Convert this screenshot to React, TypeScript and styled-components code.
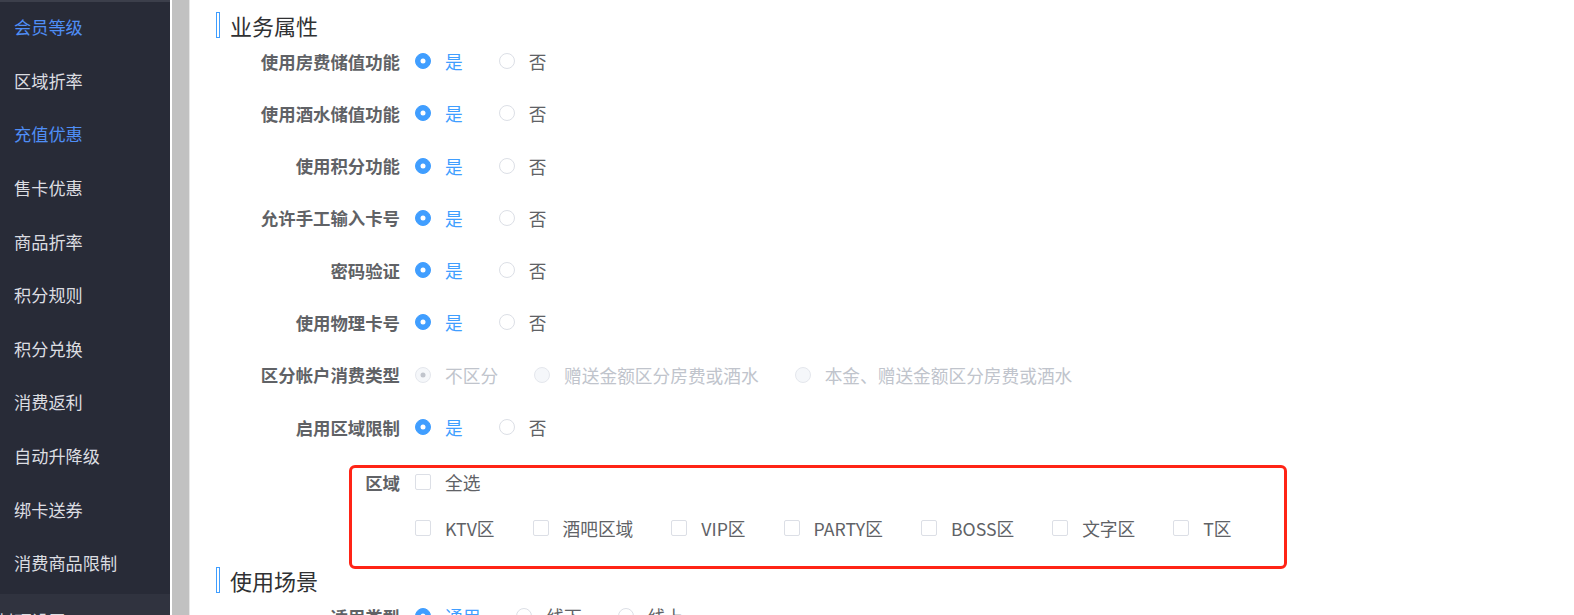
import styled, { createGlobalStyle } from "styled-components";

const GlobalStyle = createGlobalStyle`
  html, body {
    margin: 0;
    padding: 0;
    background: #fff;
  }
  body {
    font-family: "Noto Sans CJK SC", "Noto Sans", sans-serif;
    overflow: hidden;
  }
`;

const Page = styled.div`
  display: flex;
  height: 615px;
  overflow: hidden;
`;

const Sidebar = styled.nav`
  display: flex;
  flex-direction: column;
  width: 170px;
  flex-shrink: 0;
  background: #282b37;
  box-shadow: inset 0 2px 0 #3c3f4b;
  overflow: hidden;
`;

const MenuItem = styled.div<{ $active?: boolean }>`
  display: flex;
  align-items: center;
  flex-shrink: 0;
  height: 53.6px;
  padding-left: 14px;
  font-size: 17.2px;
  color: ${(p) => (p.$active ? "#4f8ef6" : "#dcdde1")};
`;

const SubMenuTitle = styled(MenuItem)`
  margin-top: 4px;
  padding-left: 0;
  background: #30333f;
  text-indent: -3px;
`;

const Gutter = styled.div`
  width: 17px;
  flex-shrink: 0;
  background: #c1c1c1;
  border-left: 2px solid #fff;
  border-right: 1px solid #e6e6e6;
`;

const Content = styled.main`
  flex: 1;
  padding-left: 26px;
  padding-top: 8px;
`;

const SectionTitle = styled.h3`
  display: flex;
  align-items: center;
  gap: 10px;
  height: 34px;
  margin: 0 0 5px;
  font-size: 22px;
  font-weight: 400;
  color: #303133;

  &::before {
    content: "";
    width: 2px;
    height: 24px;
    border: 1px solid #409eff;
    background: #fff;
  }
`;

const FormItem = styled.div`
  display: flex;
  align-items: center;
  height: 28px;
  margin-bottom: 24.3px;
`;

const Label = styled.label<{ $width?: number }>`
  width: ${(p) => p.$width ?? 199}px;
  flex-shrink: 0;
  padding-right: 15px;
  box-sizing: border-box;
  text-align: right;
  font-size: 17.4px;
  font-weight: 700;
  color: #606266;
`;

const RadioItem = styled.span`
  display: inline-flex;
  align-items: center;
  gap: 14px;
  margin-right: 36px;
`;

const RadioCircle = styled.span<{ $checked?: boolean; $disabled?: boolean }>`
  position: relative;
  width: 16px;
  height: 16px;
  box-sizing: border-box;
  border-radius: 50%;
  border: 1px solid
    ${(p) =>
      p.$disabled ? "#e4e7ed" : p.$checked ? "#409eff" : "#dcdfe6"};
  background: ${(p) =>
    p.$disabled ? "#f5f7fa" : p.$checked ? "#409eff" : "#fff"};

  &::after {
    content: "";
    display: ${(p) => (p.$checked ? "block" : "none")};
    position: absolute;
    left: 50%;
    top: 50%;
    width: 5px;
    height: 5px;
    border-radius: 50%;
    transform: translate(-50%, -50%);
    background: ${(p) => (p.$disabled ? "#c0c4cc" : "#fff")};
  }
`;

const OptionText = styled.span<{ $checked?: boolean; $disabled?: boolean }>`
  font-size: 17.7px;
  color: ${(p) =>
    p.$disabled ? "#c0c4cc" : p.$checked ? "#409eff" : "#606266"};
`;

const Highlight = styled.div`
  width: 932px;
  margin-left: 133px;
  margin-bottom: -6px;
  padding: 0 0 24px;
  border: 3px solid #ff2416;
  border-radius: 6px;
`;

const CheckRow = styled.div`
  display: flex;
  align-items: center;
  height: 28px;
  & + & {
    margin-top: 18px;
  }
`;

const CheckItem = styled.span`
  display: inline-flex;
  align-items: center;
  gap: 14px;
  margin-right: 38px;
`;

const CheckBox = styled.span`
  width: 16px;
  height: 16px;
  box-sizing: border-box;
  border: 1px solid #dcdfe6;
  border-radius: 2px;
  background: #fff;
`;

const menu = [
  { name: "会员等级", active: true },
  { name: "区域折率" },
  { name: "充值优惠", active: true },
  { name: "售卡优惠" },
  { name: "商品折率" },
  { name: "积分规则" },
  { name: "积分兑换" },
  { name: "消费返利" },
  { name: "自动升降级" },
  { name: "绑卡送券" },
  { name: "消费商品限制" },
];

const yesNoRows = [
  "使用房费储值功能",
  "使用酒水储值功能",
  "使用积分功能",
  "允许手工输入卡号",
  "密码验证",
  "使用物理卡号",
];

const areas = ["KTV区", "酒吧区域", "VIP区", "PARTY区", "BOSS区", "文字区", "T区"];

type Option = { text: string; checked?: boolean; disabled?: boolean };

function RadioGroup({ options }: { options: Option[] }) {
  return (
    <div>
      {options.map((o) => (
        <RadioItem key={o.text}>
          <RadioCircle $checked={o.checked} $disabled={o.disabled} />
          <OptionText $checked={o.checked} $disabled={o.disabled}>
            {o.text}
          </OptionText>
        </RadioItem>
      ))}
    </div>
  );
}

const yesNo: Option[] = [{ text: "是", checked: true }, { text: "否" }];

export default function App() {
  return (
    <>
      <GlobalStyle />
      <Page>
        <Sidebar>
          {menu.map((m) => (
            <MenuItem key={m.name} $active={m.active}>
              {m.name}
            </MenuItem>
          ))}
          <SubMenuTitle>封顶设置</SubMenuTitle>
        </Sidebar>
        <Gutter />
        <Content>
          <SectionTitle>业务属性</SectionTitle>
          {yesNoRows.map((label) => (
            <FormItem key={label}>
              <Label>{label}</Label>
              <RadioGroup options={yesNo} />
            </FormItem>
          ))}
          <FormItem>
            <Label>区分帐户消费类型</Label>
            <RadioGroup
              options={[
                { text: "不区分", checked: true, disabled: true },
                { text: "赠送金额区分房费或酒水", disabled: true },
                { text: "本金、赠送金额区分房费或酒水", disabled: true },
              ]}
            />
          </FormItem>
          <FormItem>
            <Label>启用区域限制</Label>
            <RadioGroup options={yesNo} />
          </FormItem>
          <Highlight>
            <CheckRow>
              <Label $width={63}>区域</Label>
              <CheckItem>
                <CheckBox />
                <OptionText>全选</OptionText>
              </CheckItem>
            </CheckRow>
            <CheckRow>
              <Label $width={63} />
              {areas.map((a) => (
                <CheckItem key={a}>
                  <CheckBox />
                  <OptionText>{a}</OptionText>
                </CheckItem>
              ))}
            </CheckRow>
          </Highlight>
          <SectionTitle>使用场景</SectionTitle>
          <FormItem>
            <Label>适用类型</Label>
            <RadioGroup
              options={[{ text: "通用", checked: true }, { text: "线下" }, { text: "线上" }]}
            />
          </FormItem>
        </Content>
      </Page>
    </>
  );
}
